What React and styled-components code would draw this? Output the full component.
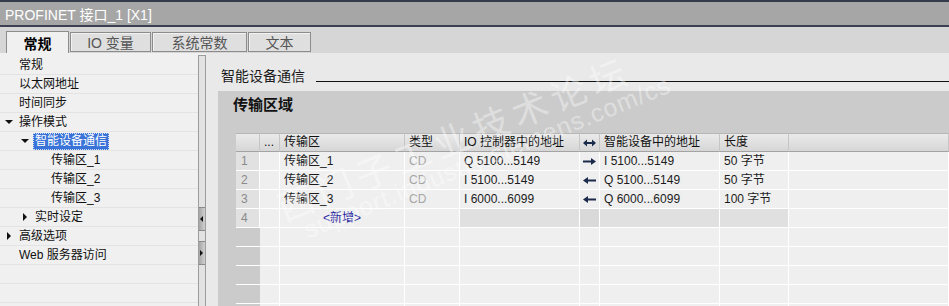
import React from "react";
import styled, { createGlobalStyle, css } from "styled-components";

const SANS = `"Liberation Sans", "Noto Sans CJK SC", sans-serif`;

const GlobalStyle = createGlobalStyle`
  html, body { margin: 0; padding: 0; background: #f0f0f0; }
  body { font-family: ${SANS}; overflow: hidden; }
`;

const Frame = styled.div`
  position: relative;
  width: 949px;
  height: 306px;
  overflow: hidden;
  display: flex;
  flex-direction: column;
  background: #f0f0f0;
`;

const TitleBar = styled.div`
  flex: none;
  height: 23px;
  border-top: 2px solid #333a4a;
  border-bottom: 2px solid #3b4151;
  background: #a6a6a6;
  color: #fff;
  font-size: 14px;
  display: flex;
  align-items: center;
  padding-left: 5px;
`;

const TabStrip = styled.div`
  flex: none;
  height: 26px;
  background: #d6d6d6;
  display: flex;
  align-items: flex-end;
  gap: 1px;
  padding-left: 6px;
`;

const Tab = styled.div`
  box-sizing: border-box;
  width: ${(p) => p.$w}px;
  display: flex;
  align-items: center;
  justify-content: center;
  font-size: 14px;
  border: 1px solid #8c8c8c;
  ${(p) =>
    p.$active
      ? css`
          height: 22px;
          border-bottom: none;
          background: #f0f0f0;
          color: #000;
          font-weight: bold;
        `
      : css`
          height: 20px;
          margin-bottom: 1px;
          background: #dfdfdf;
          color: #555;
          box-shadow: inset 1px 1px 0 #f2f2f2;
        `}
`;

const Body = styled.div`
  flex: 1;
  min-height: 0;
  display: flex;
`;

const Tree = styled.div`
  flex: none;
  width: 198px;
  padding-top: 3px;
  background: #f0f0f0;
`;

const TreeRow = styled.div`
  height: 18px;
  border-bottom: 1px solid #e3e3e3;
  display: flex;
  align-items: center;
  padding-left: ${(p) => p.$level * 16 + 4}px;
  font-size: 12px;
  color: #111;
  white-space: nowrap;
`;

const Caret = styled.span`
  flex: none;
  width: 13px;
  height: 18px;
  display: flex;
  align-items: center;
  &::before {
    content: "";
    ${(p) =>
      p.$type === "open"
        ? css`
            margin-left: 1px;
            border-left: 4px solid transparent;
            border-right: 4px solid transparent;
            border-top: 4px solid #111;
          `
        : p.$type === "closed"
        ? css`
            margin-left: 3px;
            border-top: 4px solid transparent;
            border-bottom: 4px solid transparent;
            border-left: 4px solid #111;
          `
        : css`
            display: none;
          `}
  }
`;

const TreeLabel = styled.span`
  padding: 0 1px;
  line-height: 15px;
  border: 1px dotted transparent;
  ${(p) =>
    p.$selected &&
    css`
      background: #3a73d8;
      color: #fff;
      border-color: #cfdcf5;
    `}
`;

const Splitter = styled.div`
  flex: none;
  width: 8px;
  box-sizing: border-box;
  margin-top: 2px;
  border: 1px solid #9c9c9c;
  border-bottom: none;
  background: #e2e2e2;
  display: flex;
  flex-direction: column;
  gap: 10px;
  padding-top: 151px;
`;

const SplitButton = styled.div`
  height: 22px;
  background: linear-gradient(to right, #a5a5a5, #d0d0d0);
  border-top: 1px solid #8a8a8a;
  border-bottom: 1px solid #8a8a8a;
  display: flex;
  align-items: center;
  &::before {
    content: "";
    margin-left: 1px;
    border-top: 3px solid transparent;
    border-bottom: 3px solid transparent;
    ${(p) =>
      p.$dir === "left"
        ? "border-right: 3px solid #111;"
        : "border-left: 3px solid #111;"}
  }
`;

const Content = styled.div`
  flex: 1;
  min-width: 0;
  display: flex;
  flex-direction: column;
  background: #e9e9e9;
`;

const PanelHeader = styled.div`
  flex: none;
  height: 38px;
  box-sizing: border-box;
  padding: 14px 0 0 15px;
  display: flex;
  align-items: flex-start;
`;

const PanelTitle = styled.span`
  font-size: 14px;
  line-height: 18px;
  color: #1a1a1a;
`;

const Rule = styled.div`
  flex: 1;
  height: 1px;
  margin: 14px 0 0 11px;
  background: #111;
`;

const Section = styled.div`
  flex: 1;
  min-height: 0;
  margin-left: 12px;
  padding-left: 15px;
  background: #cbcbcb;
  display: flex;
  flex-direction: column;
  overflow: hidden;
`;

const SectionTitle = styled.div`
  flex: none;
  height: 42px;
  box-sizing: border-box;
  padding-top: 5px;
  font-size: 15px;
  font-weight: bold;
  line-height: 18px;
  color: #111;
`;

const COLS = "24px 20px 125px 55px 120px 20px 120px 69px 1fr";

const Table = styled.div`
  margin-left: 3px;
  display: flex;
  flex-direction: column;
`;

const GridRow = styled.div`
  display: grid;
  grid-template-columns: ${COLS};
  height: 19px;
  flex: none;
`;

const HeadCell = styled.div`
  box-sizing: border-box;
  border-top: 1px solid #b6b6b6;
  border-bottom: 1px solid #a3a3a3;
  border-right: 1px solid #c6c6c6;
  background: linear-gradient(#eaeaea, #d6d6d6);
  font-size: 12px;
  line-height: 17px;
  padding-left: ${(p) => (p.$center ? 0 : 4)}px;
  color: #111;
  white-space: nowrap;
  overflow: hidden;
  display: flex;
  align-items: center;
  justify-content: ${(p) => (p.$center ? "center" : "flex-start")};
`;

const tones = {
  data: "#efefef",
  num: "#e1e1e1",
  fresh: "#e0e0e0",
  freshArrow: "#d9d9d9",
  gutter: "transparent",
};

const Cell = styled.div`
  box-sizing: border-box;
  border-bottom: 1px solid #fff;
  border-right: ${(p) => (p.$tone === "gutter" ? "none" : "1px solid #fff")};
  background: ${(p) => tones[p.$tone || "data"]};
  font-size: 12px;
  line-height: 18px;
  padding-left: ${(p) => (p.$pad !== undefined ? p.$pad : 4)}px;
  color: ${(p) => p.$color || "#1c1c1c"};
  white-space: nowrap;
  overflow: hidden;
  display: flex;
  align-items: center;
  justify-content: ${(p) => (p.$center ? "center" : "flex-start")};
`;

const Watermark = styled.div`
  position: absolute;
  left: 271px;
  top: 189px;
  transform: rotate(-22deg);
  transform-origin: 0 0;
  pointer-events: none;
  white-space: nowrap;
  color: rgba(255, 255, 255, 0.4);
`;

const WatermarkTitle = styled.div`
  font-family: "Noto Sans CJK SC", sans-serif;
  font-size: 36px;
  line-height: 40px;
  letter-spacing: 6px;
`;

const WatermarkUrl = styled.div`
  font-family: "Liberation Sans", sans-serif;
  font-size: 25px;
  line-height: 22px;
  margin-left: 16px;
  letter-spacing: 1px;
`;

const NAVY = "#1b2b4b";

function Arrow({ dir }) {
  if (dir === "both") {
    return (
      <svg width="13" height="8" viewBox="0 0 13 8">
        <rect x="3" y="3" width="7" height="2" fill={NAVY} />
        <polygon points="0,4 4,0.5 4,7.5" fill={NAVY} />
        <polygon points="13,4 9,0.5 9,7.5" fill={NAVY} />
      </svg>
    );
  }
  return (
    <svg width="13" height="7" viewBox="0 0 13 7">
      {dir === "right" ? (
        <>
          <rect x="0" y="2.5" width="9" height="2" fill={NAVY} />
          <polygon points="8,0 13,3.5 8,7" fill={NAVY} />
        </>
      ) : (
        <>
          <rect x="4" y="2.5" width="9" height="2" fill={NAVY} />
          <polygon points="5,0 0,3.5 5,7" fill={NAVY} />
        </>
      )}
    </svg>
  );
}

const treeItems = [
  { label: "常规", level: 0 },
  { label: "以太网地址", level: 0 },
  { label: "时间同步", level: 0 },
  { label: "操作模式", level: 0, caret: "open" },
  { label: "智能设备通信", level: 1, caret: "open", selected: true },
  { label: "传输区_1", level: 2 },
  { label: "传输区_2", level: 2 },
  { label: "传输区_3", level: 2 },
  { label: "实时设定", level: 1, caret: "closed" },
  { label: "高级选项", level: 0, caret: "closed" },
  { label: "Web 服务器访问", level: 0 },
  { label: "", level: 0 },
  { label: "", level: 0 },
];

const tabs = [
  { label: "常规", w: 63, active: true },
  { label: "IO 变量", w: 81 },
  { label: "系统常数", w: 95 },
  { label: "文本", w: 63 },
];

const areas = [
  { n: "1", name: "传输区_1", type: "CD", io: "Q 5100...5149", dir: "right", dev: "I 5100...5149", len: "50 字节" },
  { n: "2", name: "传输区_2", type: "CD", io: "I 5100...5149", dir: "left", dev: "Q 5100...5149", len: "50 字节" },
  { n: "3", name: "传输区_3", type: "CD", io: "I 6000...6099", dir: "left", dev: "Q 6000...6099", len: "100 字节" },
];

export default function App() {
  return (
    <Frame>
      <GlobalStyle />
      <TitleBar>PROFINET 接口_1 [X1]</TitleBar>
      <TabStrip>
        {tabs.map((t) => (
          <Tab key={t.label} $w={t.w} $active={t.active}>
            {t.label}
          </Tab>
        ))}
      </TabStrip>
      <Body>
        <Tree>
          {treeItems.map((it, i) => (
            <TreeRow key={i} $level={it.level}>
              {it.label && <Caret $type={it.caret} />}
              {it.label && <TreeLabel $selected={it.selected}>{it.label}</TreeLabel>}
            </TreeRow>
          ))}
        </Tree>
        <Splitter>
          <SplitButton $dir="left" />
          <SplitButton $dir="right" />
        </Splitter>
        <Content>
          <PanelHeader>
            <PanelTitle>智能设备通信</PanelTitle>
            <Rule />
          </PanelHeader>
          <Section>
            <SectionTitle>传输区域</SectionTitle>
            <Table>
              <GridRow>
                <HeadCell />
                <HeadCell>...</HeadCell>
                <HeadCell>传输区</HeadCell>
                <HeadCell>类型</HeadCell>
                <HeadCell>IO 控制器中的地址</HeadCell>
                <HeadCell $center>
                  <Arrow dir="both" />
                </HeadCell>
                <HeadCell>智能设备中的地址</HeadCell>
                <HeadCell>长度</HeadCell>
                <HeadCell />
              </GridRow>
              {areas.map((a) => (
                <GridRow key={a.n}>
                  <Cell $tone="num" $color="#8a8a8a" $pad={5}>{a.n}</Cell>
                  <Cell />
                  <Cell>{a.name}</Cell>
                  <Cell $color="#a6a6a6">{a.type}</Cell>
                  <Cell>{a.io}</Cell>
                  <Cell $center $pad={0}>
                    <Arrow dir={a.dir} />
                  </Cell>
                  <Cell>{a.dev}</Cell>
                  <Cell>{a.len}</Cell>
                  <Cell />
                </GridRow>
              ))}
              <GridRow>
                <Cell $tone="num" $color="#8a8a8a" $pad={5}>4</Cell>
                <Cell />
                <Cell $center $pad={0} $color="#1a1a9c">&lt;新增&gt;</Cell>
                <Cell />
                <Cell $tone="fresh" />
                <Cell $tone="freshArrow" />
                <Cell $tone="fresh" />
                <Cell $tone="fresh" />
                <Cell />
              </GridRow>
              {[0, 1, 2, 3, 4].map((r) => (
                <GridRow key={"e" + r}>
                  <Cell $tone="gutter" />
                  <Cell />
                  <Cell />
                  <Cell />
                  <Cell />
                  <Cell />
                  <Cell />
                  <Cell />
                  <Cell />
                </GridRow>
              ))}
            </Table>
          </Section>
        </Content>
      </Body>
      <Watermark>
        <WatermarkTitle>西门子工业技术论坛</WatermarkTitle>
        <WatermarkUrl>support.industry.siemens.com/cs</WatermarkUrl>
      </Watermark>
    </Frame>
  );
}
